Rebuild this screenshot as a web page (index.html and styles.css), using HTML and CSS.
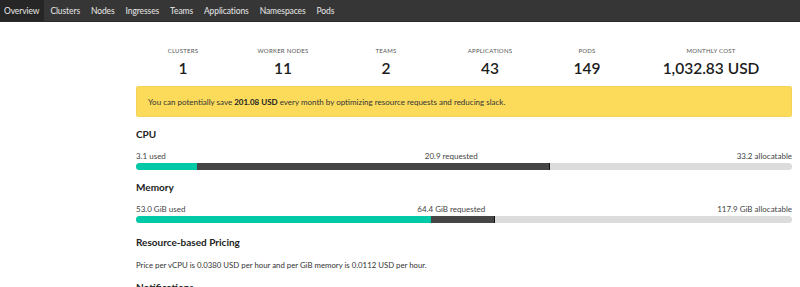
FILE: index.html
```html
<!DOCTYPE html>
<html>
<head>
<meta charset="utf-8">
<link rel="stylesheet" href="styles.css">
</head>
<body>
<nav class="nav">
  <a class="nav-item active">Overview</a>
  <a class="nav-item">Clusters</a>
  <a class="nav-item">Nodes</a>
  <a class="nav-item">Ingresses</a>
  <a class="nav-item">Teams</a>
  <a class="nav-item">Applications</a>
  <a class="nav-item">Namespaces</a>
  <a class="nav-item">Pods</a>
</nav>
<main class="content">
  <div class="stats">
    <div class="stat"><div class="stat-label">Clusters</div><div class="stat-value">1</div></div>
    <div class="stat"><div class="stat-label">Worker Nodes</div><div class="stat-value">11</div></div>
    <div class="stat"><div class="stat-label">Teams</div><div class="stat-value">2</div></div>
    <div class="stat"><div class="stat-label">Applications</div><div class="stat-value">43</div></div>
    <div class="stat"><div class="stat-label">Pods</div><div class="stat-value">149</div></div>
    <div class="stat"><div class="stat-label">Monthly Cost</div><div class="stat-value">1,032.83 USD</div></div>
  </div>
  <div class="notice">You can potentially save <strong>201.08 USD</strong> every month by optimizing resource requests and reducing slack.</div>

  <h2 class="section-title">CPU</h2>
  <div class="bar-labels"><span>3.1 used</span><span>20.9 requested</span><span>33.2 allocatable</span></div>
  <div class="bar">
    <div class="bar-used" style="width: 9.34%"></div>
    <div class="bar-requested" style="width: 53.61%"></div>
  </div>

  <h2 class="section-title">Memory</h2>
  <div class="bar-labels"><span>53.0 GiB used</span><span>64.4 GiB requested</span><span>117.9 GiB allocatable</span></div>
  <div class="bar">
    <div class="bar-used" style="width: 44.95%"></div>
    <div class="bar-requested" style="width: 9.67%"></div>
  </div>

  <h2 class="section-title section-gap">Resource-based Pricing</h2>
  <p class="text">Price per vCPU is 0.0380 USD per hour and per GiB memory is 0.0112 USD per hour.</p>

  <h2 class="section-title">Notifications</h2>
</main>
</body>
</html>
```

FILE: styles.css
```css
html, body {
  margin: 0;
  padding: 0;
  background: #ffffff;
  font-family: Lato, "Noto Sans", sans-serif;
  color: #333;
}

.nav {
  display: flex;
  height: 22px;
  background: #363636;
  border-bottom: 1px solid #2a2a2a;
  box-sizing: border-box;
}

.nav-item {
  display: flex;
  align-items: center;
  padding: 0 5px 0 6px;
  font-size: 8.5px;
  letter-spacing: -0.1px;
  color: #e8e8e8;
  text-decoration: none;
}

.nav-item.active {
  background: #262626;
  padding: 0 5px 0 4px;
}

.content {
  padding: 0 8px 0 136px;
}

.stats {
  display: grid;
  grid-template-columns: 94px 106px 100px 108px 86px 162px;
  padding-top: 25px;
  height: 39px;
}

.stat {
  text-align: center;
}

.stat-label {
  font-size: 6px;
  text-transform: uppercase;
  letter-spacing: 0.25px;
  color: #555;
  line-height: 8px;
}

.stat-value {
  font-size: 15.5px;
  font-weight: 600;
  color: #1c1c1c;
  line-height: 20px;
  margin-top: 3px;
}

.notice {
  height: 31px;
  box-sizing: border-box;
  background: #fcdb5b;
  border: 1px solid #f3d25a;
  border-radius: 2px;
  padding: 0 11px;
  display: flex;
  align-items: center;
  font-size: 8px;
  color: #333;
}

.notice strong {
  margin: 0 2px;
  font-weight: 700;
  color: #222;
}

.section-title {
  margin: 0;
  font-size: 10px;
  font-weight: 700;
  color: #222;
  line-height: 14px;
  margin-top: 10px;
}

.section-title.section-gap {
  margin-top: 12px;
}

.bar-labels {
  display: flex;
  justify-content: space-between;
  font-size: 8px;
  color: #444;
  margin-top: 10px;
  line-height: 10px;
}

.bar {
  display: flex;
  height: 7px;
  background: #dcdcdc;
  border-radius: 4px;
  overflow: hidden;
  margin-top: 2px;
}

.bar-used {
  background: #00c9a7;
}

.bar-requested {
  background: #454545;
  border-right: 1px solid #111;
}

.text {
  margin: 11px 0 0 0;
  font-size: 7.8px;
  color: #333;
  line-height: 10px;
}
```
